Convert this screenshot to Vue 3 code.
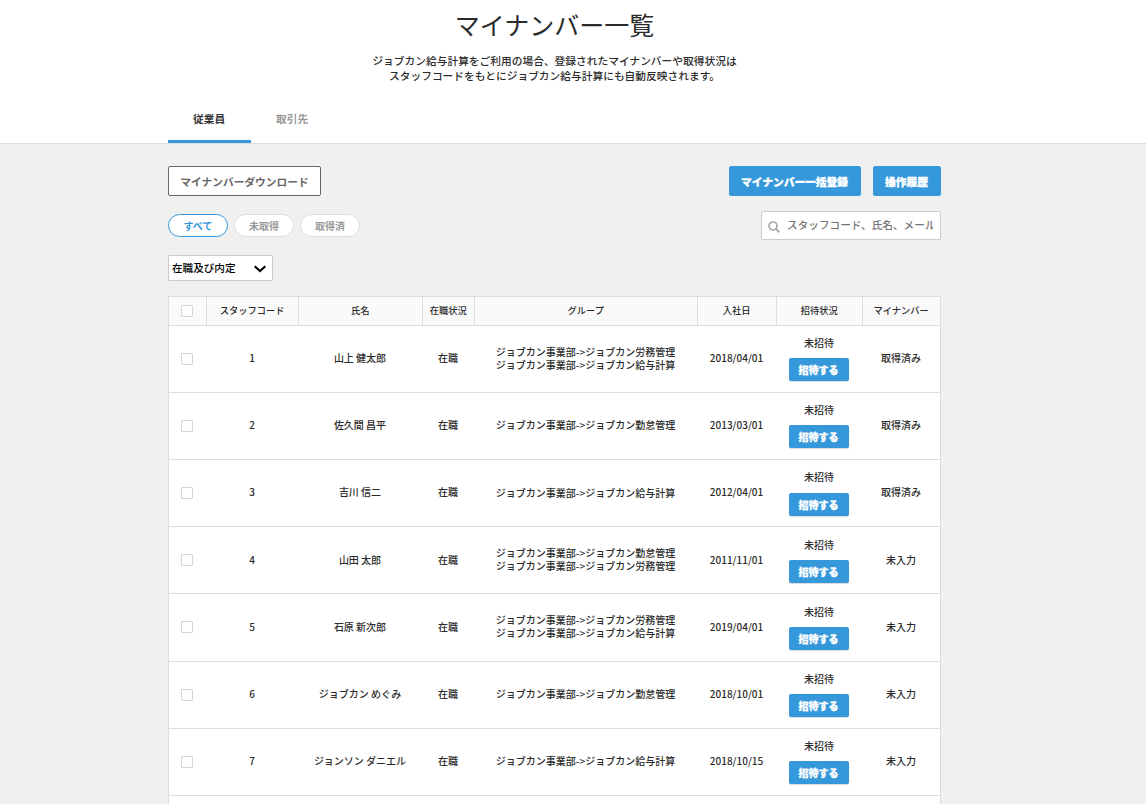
<template>
  <div class="page">
    <header class="page-header">
      <div class="container">
        <h1 class="title">マイナンバー一覧</h1>
        <p class="lead">
          ジョブカン給与計算をご利用の場合、登録されたマイナンバーや取得状況は<br>
          スタッフコードをもとにジョブカン給与計算にも自動反映されます。
        </p>
        <nav class="tabs">
          <a
            v-for="tab in tabs"
            :key="tab"
            class="tab"
            :class="{ active: tab === activeTab }"
            @click="activeTab = tab"
          >{{ tab }}</a>
        </nav>
      </div>
    </header>

    <main class="container">
      <div class="toolbar">
        <button class="btn btn-outline">マイナンバーダウンロード</button>
        <div class="toolbar-right">
          <button class="btn btn-primary btn-wide">マイナンバー一括登録</button>
          <button class="btn btn-primary">操作履歴</button>
        </div>
      </div>

      <div class="filters">
        <div class="pills">
          <button
            v-for="f in filters"
            :key="f"
            class="pill"
            :class="{ active: f === activeFilter }"
            @click="activeFilter = f"
          >{{ f }}</button>
        </div>
        <label class="search">
          <svg class="search-icon" viewBox="0 0 12 12">
            <circle cx="5" cy="5" r="4" fill="none" stroke="#aaa" stroke-width="1.7" />
            <path d="M7.9 7.9L11.2 11.2" stroke="#aaa" stroke-width="2" />
          </svg>
          <input v-model="keyword" type="text" placeholder="スタッフコード、氏名、メール">
        </label>
      </div>

      <div class="select">
        <span>在職及び内定</span>
        <svg class="chevron" viewBox="0 0 12 8">
          <path d="M0.7 1.2L6 6.1L11.3 1.2" fill="none" stroke="#000" stroke-width="2.1" />
        </svg>
      </div>

      <div class="table">
        <div class="row head">
          <div class="cell check-cell"><input type="checkbox" class="check"></div>
          <div v-for="h in headers" :key="h" class="cell">{{ h }}</div>
        </div>
        <div v-for="s in staff" :key="s.code" class="row">
          <div class="cell check-cell"><input v-model="selected" type="checkbox" class="check" :value="s.code"></div>
          <div class="cell">{{ s.code }}</div>
          <div class="cell">{{ s.name }}</div>
          <div class="cell">在職</div>
          <div class="cell groups">
            <div v-for="g in s.groups" :key="g">ジョブカン事業部-&gt;ジョブカン{{ g }}</div>
          </div>
          <div class="cell">{{ s.joined }}</div>
          <div class="cell invite">
            <span>未招待</span>
            <button class="btn-invite">招待する</button>
          </div>
          <div class="cell">{{ s.status }}</div>
        </div>
        <div class="row"></div>
      </div>
    </main>
  </div>
</template>

<script setup>
import { ref } from 'vue'

const tabs = ['従業員', '取引先']
const activeTab = ref('従業員')

const filters = ['すべて', '未取得', '取得済']
const activeFilter = ref('すべて')

const keyword = ref('')
const selected = ref([])

const headers = ['スタッフコード', '氏名', '在職状況', 'グループ', '入社日', '招待状況', 'マイナンバー']

const staff = [
  { code: 1, name: '山上 健太郎', groups: ['労務管理', '給与計算'], joined: '2018/04/01', status: '取得済み' },
  { code: 2, name: '佐久間 昌平', groups: ['勤怠管理'], joined: '2013/03/01', status: '取得済み' },
  { code: 3, name: '吉川 信二', groups: ['給与計算'], joined: '2012/04/01', status: '取得済み' },
  { code: 4, name: '山田 太郎', groups: ['勤怠管理', '労務管理'], joined: '2011/11/01', status: '未入力' },
  { code: 5, name: '石原 新次郎', groups: ['労務管理', '給与計算'], joined: '2019/04/01', status: '未入力' },
  { code: 6, name: 'ジョブカン めぐみ', groups: ['勤怠管理'], joined: '2018/10/01', status: '未入力' },
  { code: 7, name: 'ジョンソン ダニエル', groups: ['給与計算'], joined: '2018/10/15', status: '未入力' }
]
</script>

<style>
body {
  margin: 0;
  background: #f0f0f0;
  overflow: hidden;
}
</style>

<style scoped>
.page {
  height: 804px;
  overflow: hidden;
  background: #f0f0f0;
  color: #2b2b2b;
  font-family: "Noto Sans CJK JP", sans-serif;
  font-size: 10px;
  font-weight: 500;
}

.page * {
  box-sizing: border-box;
}

button,
input {
  font-family: inherit;
}

.container {
  width: 773px;
  margin-left: 168px;
}

.page-header {
  height: 144px;
  background: #fff;
  border-bottom: 1px solid #ddd;
  box-sizing: border-box;
}

.title {
  margin: 0;
  padding-top: 6px;
  font-size: 25px;
  line-height: 36px;
  font-weight: 400;
  text-align: center;
}

.lead {
  margin: 11px 0 0;
  font-size: 10.72px;
  line-height: 15px;
  text-align: center;
}

.tabs {
  display: flex;
  margin-top: 13px;
}

.tab {
  height: 47px;
  padding: 0 25.8px 0 25px;
  font-size: 10.72px;
  line-height: 46px;
  font-weight: 700;
  color: #999;
  cursor: pointer;
}

.tab.active {
  color: #333;
  border-bottom: 3px solid #3498db;
}

.toolbar {
  display: flex;
  justify-content: space-between;
  padding-top: 22px;
}

.toolbar-right {
  display: flex;
  gap: 12px;
}

.btn {
  height: 30px;
  padding: 1px 11px 0;
  border: 1px solid #3498db;
  border-radius: 2px;
  font-size: 10.72px;
  font-weight: 700;
  white-space: nowrap;
  cursor: pointer;
}

.btn-outline {
  width: 153px;
  background: #fff;
  border-color: #666;
  color: #666;
}

.btn-primary {
  width: 68px;
  padding: 1px 1px 0 0;
  background: #3498db;
  color: #fff;
  font-weight: 900;
  -webkit-text-stroke: 0.3px #fff;
}

.btn-wide {
  width: 132px;
}

.filters {
  display: flex;
  justify-content: space-between;
  margin-top: 15px;
}

.pills {
  display: flex;
  gap: 6px;
  margin-top: 3px;
}

.pill {
  width: 60px;
  height: 23px;
  padding: 0;
  border: 1px solid #ddd;
  border-radius: 12px;
  background: #fff;
  color: #999;
  font-size: 10px;
  font-weight: 700;
  cursor: pointer;
}

.pill.active {
  border-color: #3498db;
  color: #3498db;
}

.search {
  display: flex;
  align-items: center;
  width: 180px;
  height: 29px;
  padding: 0 7px 0 6px;
  border: 1px solid #ccc;
  border-radius: 2px;
  background: #fff;
}

.search-icon {
  flex: none;
  width: 12px;
  height: 12px;
  margin-top: 3px;
}

.search input {
  flex: 1;
  min-width: 0;
  margin-left: 7px;
  padding: 0 0 2px;
  border: 0;
  outline: 0;
  background: none;
  font-size: 10.65px;
  font-weight: 500;
}

.search input::placeholder {
  color: #757575;
}

.select {
  display: flex;
  align-items: center;
  justify-content: space-between;
  width: 105px;
  height: 26px;
  margin-top: 15px;
  padding: 0 6px 0 3px;
  border: 1px solid #ccc;
  border-radius: 1px;
  background: #fff;
  color: #000;
  font-size: 10.6px;
  font-weight: 500;
}

.select span {
  padding-bottom: 1px;
}

.chevron {
  width: 12px;
  height: 8px;
  margin-top: 2px;
}

.table {
  margin-top: 15px;
  border: 1px solid #ddd;
  background: #fff;
}

.row {
  display: grid;
  grid-template-columns: 37px 92px 124px 52px 223px 79px 86px 78px;
  height: 67.12px;
  border-bottom: 1px solid #ddd;
}

.row.head {
  height: 29px;
  background: #fafafa;
  font-size: 9.25px;
}

.cell {
  display: flex;
  align-items: center;
  justify-content: center;
  padding-bottom: 2.67px;
  white-space: nowrap;
}

.head .cell {
  padding-right: 0.6px;
  padding-bottom: 2px;
}

.cell.check-cell {
  padding: 0 1px 0 0;
}

.head .cell + .cell {
  border-left: 1px solid #ddd;
}

.groups {
  flex-direction: column;
  padding-bottom: 2px;
  line-height: 13.4px;
}

.invite {
  flex-direction: column;
  padding-bottom: 0.56px;
  line-height: 14px;
}

.btn-invite {
  width: 60px;
  height: 23px;
  margin-top: 8.11px;
  padding: 0 1px 0 0;
  border: 0;
  border-radius: 2px;
  background: #3498db;
  box-shadow: 0 1px 1px rgba(0, 0, 0, 0.15);
  color: #fff;
  font-size: 10px;
  font-weight: 900;
  -webkit-text-stroke: 0.3px #fff;
  cursor: pointer;
}

.check {
  appearance: none;
  width: 12px;
  height: 12px;
  margin: 0;
  border: 1px solid #d5d5d5;
  border-radius: 1px;
  background: #fff;
}

.check:checked {
  background: #3498db;
}
</style>
